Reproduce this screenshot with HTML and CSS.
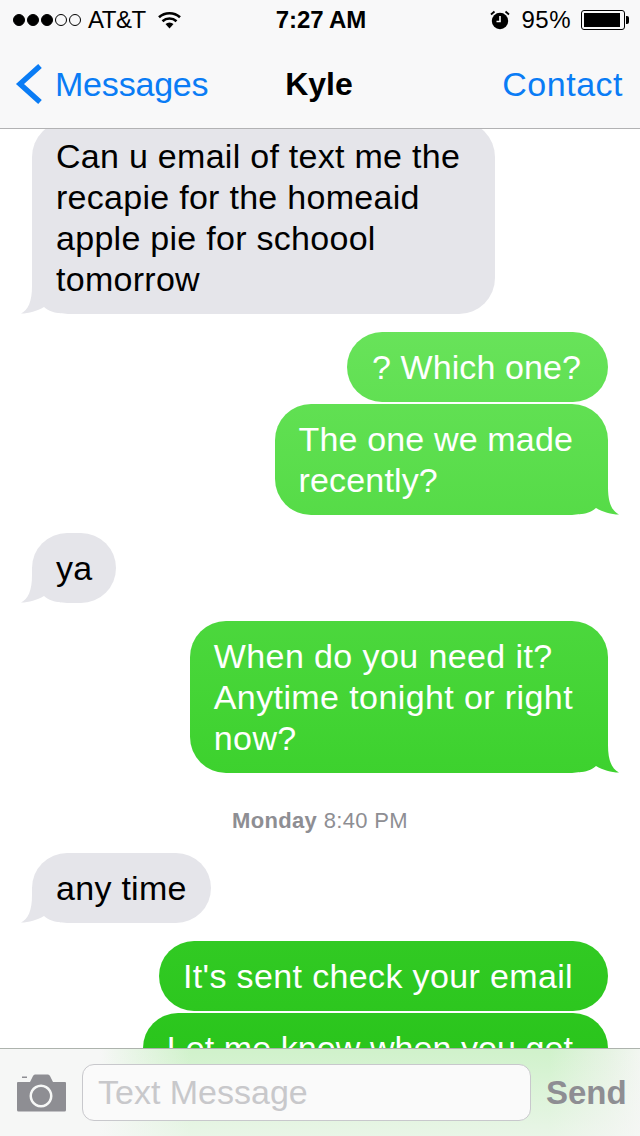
FILE: index.html
```html
<!DOCTYPE html>
<html lang="en">
<head>
    <meta charset="UTF-8">
    <meta name="viewport" content="width=device-width, initial-scale=1.0">
    <title>Kyle</title>
    <link rel="stylesheet" href="styles.css">
</head>
<body>
    <div class="phone">
        <header class="topbar">
            <div class="status">
                <div class="status-left">
                    <span class="dots"><i class="dot on"></i><i class="dot on"></i><i class="dot on"></i><i class="dot"></i><i class="dot"></i></span>
                    <span class="carrier">AT&amp;T</span>
                    <svg class="wifi" width="25" height="18" viewBox="0 0 25 18">
                        <path d="M12.500 17.500 8.500 13a6 6 0 0 1 8 0z" fill="#000"/>
                        <path d="M5.500 10.200a10.500 10.500 0 0 1 14 0M2 6.300a15.500 15.500 0 0 1 21 0" fill="none" stroke="#000" stroke-width="2.600"/>
                    </svg>
                </div>
                <div class="clock">7:27 AM</div>
                <div class="status-right">
                    <svg class="alarm" width="20" height="20" viewBox="0 0 20 20">
                        <circle cx="10" cy="11" r="8.200" fill="#000"/>
                        <path d="M10 6v5.500H6.500" fill="none" stroke="#fff" stroke-width="1.600"/>
                        <path d="M1 4.500 4.500 1.500M19 4.500 15.500 1.500" stroke="#000" stroke-width="1.800"/>
                    </svg>
                    <span class="percent">95%</span>
                    <span class="battery"><span class="battery-fill"></span></span>
                </div>
            </div>
            <nav class="navbar">
                <a class="nav-back">
                    <svg width="28" height="42" viewBox="0 0 28 42">
                        <path d="M25 3 5 21l20 18" fill="none" stroke="#0a7cf5" stroke-width="5.400"/>
                    </svg>
                    Messages
                </a>
                <div class="nav-title">Kyle</div>
                <a class="nav-action">Contact</a>
            </nav>
        </header>

        <main class="thread">
            <div class="bubble in tail first wide">Can u email of text me the<br>recapie for the homeaid<br>apple pie for schoool<br>tomorrow</div>
            <div class="bubble out gap msg-which">? Which one?</div>
            <div class="bubble out tail wide near msg-recent">The one we made<br>recently?</div>
            <div class="bubble in tail gap">ya</div>
            <div class="bubble out tail wide gap msg-when">When do you need it?<br>Anytime tonight or right<br>now?</div>
            <div class="stamp"><b>Monday</b> 8:40 PM</div>
            <div class="bubble in tail">any time</div>
            <div class="bubble out wide gap msg-sent">It's sent check your email</div>
            <div class="bubble out wide near msg-know">Let me know when you get</div>
        </main>

        <footer class="composer">
            <svg class="camera" width="50" height="38" viewBox="0 0 50 38">
                <path fill-rule="evenodd" fill="#8e8e93" d="M1 8h13l3-6q.7-1.500 2-1.500h13q1.300 0 2 1.500l3 6h12q1 0 1 1v27q0 1.500-1.500 1.500h-46q-1.500 0-1.500-1.500V9q0-1 1-1zM25 10.500a11.500 11.500 0 1 0 .01 0zM25 13a9 9 0 1 1-.01 0z"/>
                <rect x="6" y="2.500" width="5" height="1.500" fill="#8e8e93"/>
            </svg>
            <div class="message-box">Text Message</div>
            <div class="send">Send</div>
        </footer>
    </div>
</body>
</html>
```

FILE: styles.css
```css
* {
    box-sizing: border-box;
}
body {
    margin: 0;
    background-color: white;
    font-family: "Liberation Sans", Arial, sans-serif;
}
.phone {
    width: 640px;
    height: 1136px;
    display: flex;
    flex-direction: column;
    overflow: hidden;
}

/* status bar and nav */
.topbar {
    height: 129px;
    background-color: #f8f8f9;
    border-bottom: 1px solid #b2b2b4;
}
.status {
    height: 40px;
    padding: 0 11px 0 13px;
    display: grid;
    grid-template-columns: 1fr auto 1fr;
    align-items: center;
    font-size: 24px;
    color: #000;
}
.status-left, .status-right {
    display: flex;
    align-items: center;
}
.status-right {
    justify-content: flex-end;
}
.dots {
    display: flex;
    gap: 2px;
}
.dot {
    width: 12px;
    height: 12px;
    border: 1px solid #000;
    border-radius: 50%;
}
.dot.on {
    background-color: #000;
}
.carrier {
    margin-left: 7px;
    letter-spacing: -0.5px;
}
.wifi {
    margin-left: 11px;
}
.clock {
    font-weight: bold;
    letter-spacing: -0.1px;
}
.alarm {
    margin-right: 11px;
}
.percent {
    margin-right: 10px;
    letter-spacing: 0.5px;
}
.battery {
    position: relative;
    width: 44px;
    height: 20px;
    padding: 2px;
    border: 1px solid #000;
    border-radius: 3px;
    margin-right: 4px;
}
.battery::after {
    content: "";
    position: absolute;
    right: -5px;
    top: 5px;
    width: 3px;
    height: 8px;
    background-color: #000;
    border-radius: 0 2px 2px 0;
}
.battery-fill {
    display: block;
    width: 95%;
    height: 100%;
    background-color: #000;
}
.navbar {
    height: 88px;
    padding: 0 17px 0 15px;
    display: grid;
    grid-template-columns: 1fr auto 1fr;
    align-items: center;
    font-size: 34px;
    color: #0a7cf5;
}
.nav-back {
    display: flex;
    align-items: center;
    gap: 12px;
    letter-spacing: -0.2px;
}
.nav-title {
    color: #000;
    font-size: 32px;
    font-weight: bold;
}
.nav-action {
    text-align: right;
    letter-spacing: 0.5px;
}

/* messages */
.thread {
    flex: 1;
    min-height: 0;
    overflow: hidden;
    display: flex;
    flex-direction: column;
    padding: 0 32px;
}
.bubble {
    position: relative;
    flex: none;
    padding: 14.500px 24px;
    border-radius: 36px;
    font-size: 34px;
    letter-spacing: 0.28px;
    line-height: 41px;
    white-space: nowrap;
}
.bubble.wide {
    padding-right: 35px;
}
.in {
    align-self: flex-start;
    background-color: #e5e5ea;
    color: #000;
}
.out {
    align-self: flex-end;
    color: #fff;
    background-image: linear-gradient(to bottom, #6be45d 300px, #3ed22f 760px, #2ac51c 1050px);
    background-attachment: fixed;
}
.first {
    margin-top: -8px;
}
.gap {
    margin-top: 18px;
}
.near {
    margin-top: 2px;
}

/* the font runs a little wider or narrower per line than the original */
.msg-which {
    padding-left: 25px;
    padding-right: 27px;
    letter-spacing: 0.1px;
}
.msg-recent {
    letter-spacing: 0.15px;
}
.msg-when {
    letter-spacing: 0.4px;
}
.msg-sent {
    letter-spacing: 0.36px;
}
.msg-know {
    letter-spacing: 0.07px;
}

.tail::after {
    content: "";
    position: absolute;
    z-index: -1;
    bottom: 0;
    width: 40px;
    height: 36px;
    background: inherit;
}
.in.tail::after {
    left: -11px;
    clip-path: path("M11 0L11 8C11 24 7 32 0 35.500C8 35.500 16 33 23 29C28 33 33 35 40 35.300L40 0Z");
}
.out.tail::after {
    right: -11px;
    clip-path: path("M29 0L29 8C29 24 33 32 40 35.500C32 35.500 24 33 17 29C12 33 7 35 0 35.300L0 0Z");
}
.stamp {
    flex: none;
    margin: 35px 0 19px;
    text-align: center;
    font-size: 22px;
    letter-spacing: 0.35px;
    line-height: 26px;
    color: #8e8e93;
}

/* input bar */
.composer {
    height: 88px;
    flex: none;
    padding: 0 14px 0 16px;
    display: flex;
    align-items: center;
    border-top: 1px solid #adb3ad;
    background-color: #f6f7f6;
    background-image:
        linear-gradient(to bottom, rgba(246, 247, 246, 0) 0, rgba(246, 247, 246, 0.65) 100%),
        linear-gradient(to right, #f6f7f6 100px, #d0f2cb 190px, #d0f2cb 550px, #e6f3e3 610px, #f2f6f1 640px);
}
.camera {
    flex: none;
}
.message-box {
    flex: none;
    width: 449px;
    height: 57px;
    margin-left: 16px;
    padding-left: 15px;
    background-color: #fafafa;
    border: 1px solid #c8c8cc;
    border-radius: 12px;
    font-size: 34px;
    line-height: 55px;
    color: #c8c8cb;
}
.send {
    margin-left: 15px;
    font-size: 33px;
    font-weight: bold;
    color: #8e8e93;
}
```
